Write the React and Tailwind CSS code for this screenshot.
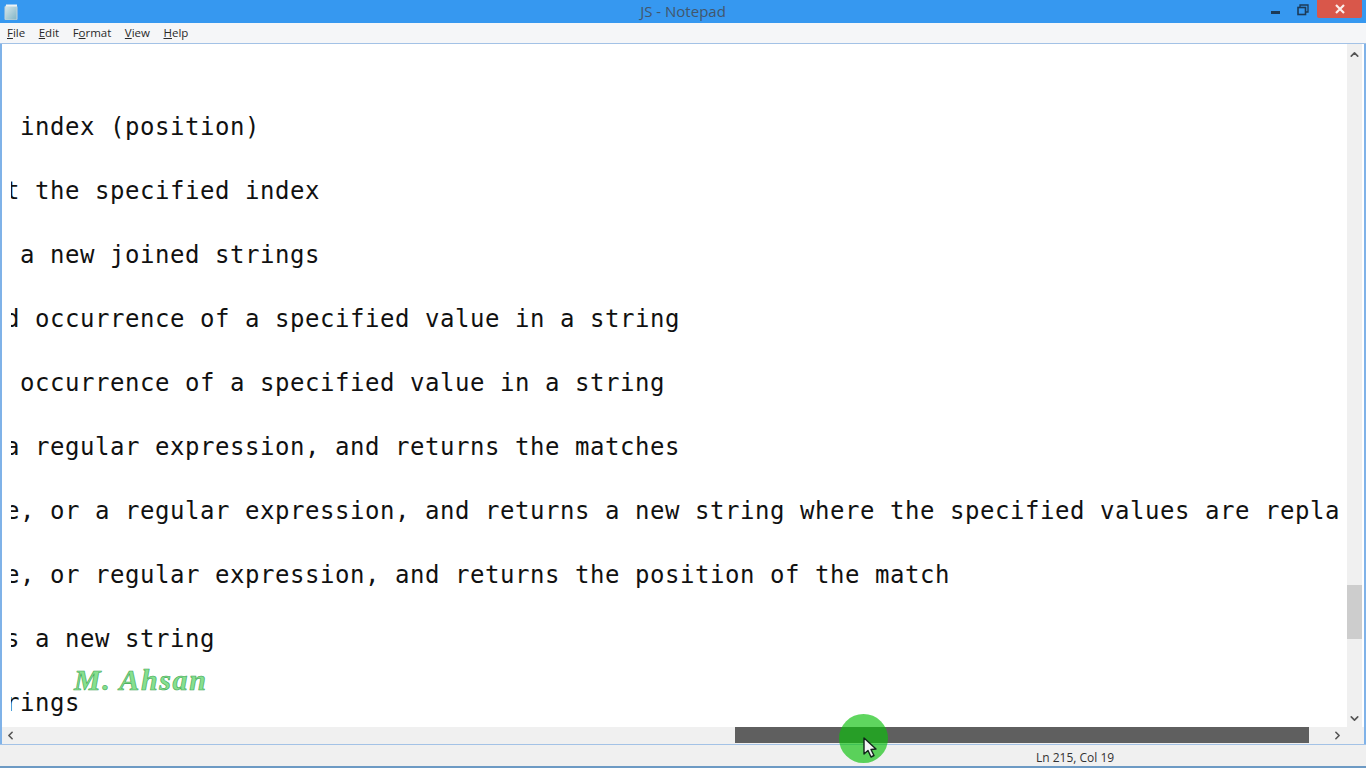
import { ChevronUp, ChevronDown, ChevronLeft, ChevronRight } from 'lucide-react'

const MENU = [
  { key: 'F', rest: 'ile' },
  { key: 'E', rest: 'dit' },
  { pre: 'F', key: 'o', rest: 'rmat' },
  { key: 'V', rest: 'iew' },
  { key: 'H', rest: 'elp' },
]

// every second row is blank in the file, so the rows sit 64px apart
const LINES = [
  ' index (position)',
  't the specified index',
  ' a new joined strings',
  'd occurrence of a specified value in a string',
  ' occurrence of a specified value in a string',
  'a regular expression, and returns the matches',
  'e, or a regular expression, and returns a new string where the specified values are replaced',
  'e, or regular expression, and returns the position of the match',
  's a new string',
  'rings',
]

function NotepadIcon() {
  return (
    <svg width="16" height="16" viewBox="0 0 16 16" className="ml-[3px]">
      <defs>
        <linearGradient id="pad" x1="0" y1="0" x2="1" y2="1">
          <stop offset="0" stopColor="#d8e8ec" />
          <stop offset="1" stopColor="#7fb3c4" />
        </linearGradient>
      </defs>
      <rect x="2" y="2" width="12" height="14" rx="1" fill="url(#pad)" stroke="#c4d4da" />
      <rect x="3" y="0.5" width="11" height="2" fill="#eef3f5" />
    </svg>
  )
}

function Cursor() {
  return (
    <svg width="15" height="22" viewBox="0 0 15 22" className="absolute left-[862px] top-[737px]">
      <path d="M2 1 L2 17 L6 13.5 L9 20 L12 18.5 L9 12.5 L14 12 Z" fill="#f4f4f4" stroke="#10241a" strokeWidth="1.4" strokeLinejoin="round" />
    </svg>
  )
}

export default function App() {
  return (
    <div className="relative h-[768px] w-[1366px] overflow-hidden bg-[#f0f0f0] font-['Open_Sans',sans-serif] text-[#1c1c1c]">
      <div className="flex h-[23px] items-center bg-[#3698f0]">
        <NotepadIcon />
        <div className="flex-1 pl-[76px] text-center text-[15px] leading-[23px] text-[#42566c]">JS - Notepad</div>
        <div className="flex h-[23px] items-start">
          <div className="mt-[11px] mr-[17px] h-[3px] w-[9px] bg-[#1c3a57]" />
          <svg width="12" height="12" viewBox="0 0 12 12" className="mt-[4px] mr-[8px]">
            <path d="M3 3V1h8v7H9" fill="none" stroke="#1c3a57" strokeWidth="1.3" />
            <rect x="1" y="3.5" width="7.5" height="7" fill="none" stroke="#1c3a57" strokeWidth="1.6" />
          </svg>
          <div className="mr-[4px] flex h-[18px] w-[45px] items-center justify-center rounded-b-[2px] bg-[#d9574a]">
            <svg width="10" height="10" viewBox="0 0 10 10">
              <path d="M1 1l8 8M9 1l-8 8" stroke="#fbeeea" strokeWidth="2.2" />
            </svg>
          </div>
        </div>
      </div>

      <div className="flex h-[20px] items-center gap-[13.5px] bg-[#f5f6f8] pl-[7px] text-[11.5px] text-[#2a2a2a]">
        {MENU.map(m => (
          <span key={m.key + m.rest}>
            {m.pre}
            <span className="underline">{m.key}</span>
            {m.rest}
          </span>
        ))}
      </div>

      <div className="flex h-[702px] border-y border-[#a3c2e6] bg-white">
        <div className="flex min-w-0 flex-1 flex-col border-x-2 border-[#7fb2e8]">
          <div className="flex min-h-0 flex-1">
            <div className="ml-[9px] w-[1328px] overflow-hidden pt-[67px] font-['DejaVu_Sans_Mono',monospace] text-[24px] leading-[32px] tracking-[0.55px] text-[#111]">
              {LINES.map(line => (
                <div key={line} className="-ml-[6px] mb-[32px] whitespace-pre">{line}</div>
              ))}
            </div>
            <div className="ml-auto flex w-[15px] flex-col items-center bg-[#f0f0f0] pt-[4px] pb-[2px] mr-[2px]">
              <ChevronUp size={13} strokeWidth={3} className="text-[#555]" />
              <div className="mt-[524px] h-[54px] w-full bg-[#cdcdcd]" />
              <div className="flex-1" />
              <ChevronDown size={13} strokeWidth={3} className="text-[#555]" />
            </div>
          </div>
          <div className="flex h-[17px] items-center bg-[#f0f0f0]">
            <ChevronLeft size={13} strokeWidth={3} className="ml-[2px] text-[#555]" />
            <div className="ml-[718px] h-[16px] w-[574px] self-start bg-[#5f5f5f]" />
            <ChevronRight size={13} strokeWidth={3} className="ml-[22px] text-[#555]" />
          </div>
        </div>
      </div>

      <div className="flex h-[21px] items-center bg-[#f0f0f0] pt-[4px] text-[12px] text-[#333]">
        <span className="ml-[1036px]">Ln 215, Col 19</span>
      </div>
      <div className="h-[2px] bg-[#6d9ac4]" />

      <div className="absolute left-[74px] top-[662px] font-['Liberation_Serif',serif] text-[30px] font-bold italic leading-[36px] tracking-[1.6px] text-[#86e08f] [-webkit-text-stroke:0.6px_#3da552]">
        M. Ahsan
      </div>
      <div className="absolute left-[839px] top-[714px] h-[49px] w-[49px] rounded-full bg-[#09c009]/65" />
      <Cursor />
    </div>
  )
}
